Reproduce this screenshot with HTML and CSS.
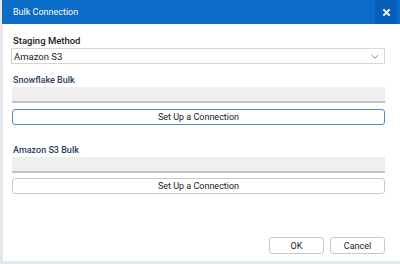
FILE: index.html
```html
<!DOCTYPE html>
<html lang="en">
<head>
    <meta charset="UTF-8">
    <title>Bulk Connection</title>
    <link rel="stylesheet" href="styles.css">
</head>
<body>
    <div class="dialog">
        <div class="title-bar">
            <span class="title">Bulk Connection</span>
            <div class="close-btn">
                <svg viewBox="0 0 10 10" width="9" height="9">
                    <path d="M1.5 1.5 L8.5 8.5 M8.5 1.5 L1.5 8.5" stroke="#fff" stroke-width="2.2"/>
                </svg>
            </div>
        </div>
        <div class="content">
            <div class="field">
                <label class="label">Staging Method</label>
                <div class="select">
                    <span>Amazon S3</span>
                    <svg viewBox="0 0 10 6" width="8" height="5">
                        <path d="M1 1 L5 5 L9 1" stroke="#777" stroke-width="1" fill="none"/>
                    </svg>
                </div>
            </div>
            <div class="section">
                <label class="label section-label">Snowflake Bulk</label>
                <div class="readonly"></div>
                <button class="btn-wide focused">Set Up a Connection</button>
            </div>
            <div class="section second">
                <label class="label section-label">Amazon S3 Bulk</label>
                <div class="readonly"></div>
                <button class="btn-wide">Set Up a Connection</button>
            </div>
            <div class="footer">
                <button class="btn">OK</button>
                <button class="btn">Cancel</button>
            </div>
        </div>
    </div>
</body>
</html>
```

FILE: styles.css
```css
/* Bulk connection dialog */
body {
    margin: 0;
    padding: 0;
    width: 400px;
    height: 264px;
    background: #e4e7ee;
    font-family: Roboto, "Noto Sans", sans-serif;
    font-size: 9px;
    color: #1a1a1a;
    overflow: hidden;
}
.dialog {
    margin-left: 3px;
    height: 261px;
    background: #fff;
    display: flex;
    flex-direction: column;
}
.title-bar {
    height: 24px;
    background: #0a6cc8;
    display: flex;
    align-items: center;
    justify-content: space-between;
    margin-left: -1px;
}
.title {
    color: #fff;
    padding-left: 11px;
    font-size: 9px;
}
.close-btn {
    width: 22px;
    height: 24px;
    margin-right: 3px;
    background: #0660bb;
    display: flex;
    align-items: center;
    justify-content: center;
}
.content {
    flex: 1;
    display: flex;
    flex-direction: column;
    padding: 11px 15px 7px 8px;
}
.label {
    display: block;
    font-weight: 500;
    font-size: 9.5px;
    line-height: 12px;
    margin-left: 2px;
    margin-bottom: 1px;
}
.section-label {
    color: #2c3e5c;
    font-size: 9px;
}
.select {
    height: 14px;
    border: 1px solid #d6d6d6;
    display: flex;
    align-items: center;
    justify-content: space-between;
    padding: 0 5px 0 2px;
    font-size: 9.5px;
}
.section {
    margin-top: 10px;
}
.section.second {
    margin-top: 19px;
}
.readonly {
    height: 14px;
    background: #efefef;
    border-bottom: 2px solid #c4c4c4;
    margin-left: 1px;
}
.second .readonly {
    margin-top: 1px;
}
.btn-wide {
    display: block;
    width: calc(100% - 1px);
    margin: 6px 0 0 1px;
    height: 16px;
    padding: 0;
    background: #fff;
    border: 1px solid #c8c8c8;
    border-radius: 3px;
    font-family: inherit;
    font-size: 9px;
    color: #1a1a1a;
}
.second .btn-wide {
    margin-top: 5px;
}
.btn-wide.focused {
    border-color: #3d8fd6;
}
.footer {
    margin-top: auto;
    display: flex;
    justify-content: flex-end;
    gap: 6px;
}
.btn {
    width: 55px;
    height: 17px;
    padding: 0;
    background: #fff;
    border: 1px solid #c8c8c8;
    border-radius: 3px;
    font-family: inherit;
    font-size: 9px;
    color: #1a1a1a;
}
```
